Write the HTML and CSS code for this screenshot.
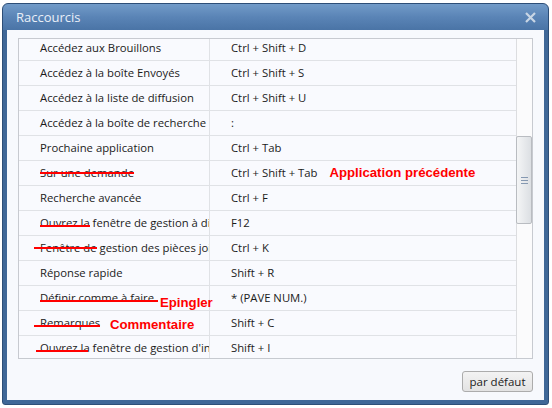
FILE: index.html
```html
<!DOCTYPE html>
<html lang="fr">
<head>
    <meta charset="UTF-8">
    <meta name="viewport" content="width=device-width, initial-scale=1.0">
    <title>Raccourcis</title>
    <link rel="stylesheet" href="styles.css">
</head>
<body>
    <div class="window">
        <div class="titlebar">
            <span class="title">Raccourcis</span>
            <span class="close">
                <svg width="11" height="11" viewBox="0 0 11 11">
                    <path d="M1 1L10 10M10 1L1 10" stroke="#c9d6e5" stroke-width="2.2" fill="none"/>
                </svg>
            </span>
        </div>

        <div class="client">
            <div class="shortcutTable">
                <div class="viewport">
                    <div class="rows">
                        <div class="row">
                            <div class="cmd">Accédez aux Brouillons</div>
                            <div class="keys">Ctrl + Shift + D</div>
                        </div>
                        <div class="row">
                            <div class="cmd">Accédez à la boîte Envoyés</div>
                            <div class="keys">Ctrl + Shift + S</div>
                        </div>
                        <div class="row">
                            <div class="cmd">Accédez à la liste de diffusion</div>
                            <div class="keys">Ctrl + Shift + U</div>
                        </div>
                        <div class="row">
                            <div class="cmd">Accédez à la boîte de recherche</div>
                            <div class="keys">:</div>
                        </div>
                        <div class="row">
                            <div class="cmd">Prochaine application</div>
                            <div class="keys">Ctrl + Tab</div>
                        </div>
                        <div class="row">
                            <div class="cmd"><span class="strike hi">Sur une demande</span></div>
                            <div class="keys">Ctrl + Shift + Tab<span class="note inline">Application précédente</span></div>
                        </div>
                        <div class="row">
                            <div class="cmd">Recherche avancée</div>
                            <div class="keys">Ctrl + F</div>
                        </div>
                        <div class="row">
                            <div class="cmd"><span class="strike">Ouvrez la</span> fenêtre de gestion à distance</div>
                            <div class="keys">F12</div>
                        </div>
                        <div class="row">
                            <div class="cmd"><span class="strike hi out">Fenêtre de</span> gestion des pièces jointes</div>
                            <div class="keys">Ctrl + K</div>
                        </div>
                        <div class="row">
                            <div class="cmd">Réponse rapide</div>
                            <div class="keys">Shift + R</div>
                        </div>
                        <div class="row">
                            <div class="cmd"><span class="strike long">Définir comme à faire</span></div>
                            <div class="keys">* (PAVE NUM.)</div>
                            <span class="note pin">Epingler</span>
                        </div>
                        <div class="row">
                            <div class="cmd"><span class="strike out">Remarques</span></div>
                            <div class="keys">Shift + C</div>
                            <span class="note comment">Commentaire</span>
                        </div>
                        <div class="row">
                            <div class="cmd"><span class="strike out short">Ouvrez la</span> fenêtre de gestion d'informations</div>
                            <div class="keys">Shift + I</div>
                        </div>
                    </div>
                </div>
                <div class="scrollbar">
                    <div class="thumb">
                        <svg width="7" height="7" viewBox="0 0 7 7">
                            <path d="M0 0.5H7M0 3.5H7M0 6.5H7" stroke="#8598b1" stroke-width="1"/>
                        </svg>
                    </div>
                </div>
            </div>

            <div class="actions">
                <button class="btn">par défaut</button>
            </div>
        </div>
    </div>
</body>
</html>
```

FILE: styles.css
```css
body {
    margin: 0;
    padding: 3px 0 0 2px;
    background-color: #fff;
    font-family: "Open Sans", sans-serif;
    font-size: 11.3px;
    color: #1b1b1b;
}

.window {
    width: 547px;
    height: 402px;
    box-sizing: border-box;
    border: 1px solid #2d4e77;
    border-radius: 6px 6px 3px 3px;
    background: linear-gradient(to bottom, #729bc8 0, #5a84b6 13px, #4a74a6 26px, #3f6797 26px);
    padding: 0 4px 4px;
    display: flex;
    flex-direction: column;
}

.titlebar {
    height: 26px;
    display: flex;
    align-items: center;
    justify-content: space-between;
    padding: 0 8px 0 9px;
}

.title {
    font-size: 13px;
    color: #e9eff8;
}

.close svg {
    display: block;
}

.client {
    flex: 1;
    background-color: #f7f9fd;
    padding: 8px 11px;
    display: flex;
    flex-direction: column;
}

.shortcutTable {
    height: 321px;
    box-sizing: border-box;
    border: 1px solid #c7cad0;
    background-color: #f9fafe;
    display: flex;
}

.viewport {
    flex: 1;
    overflow: hidden;
}

/* list is scrolled down by a few pixels */
.rows {
    margin-top: -3px;
}

.row {
    position: relative;
    display: grid;
    grid-template-columns: 191px 1fr;
    height: 25px;
    box-sizing: border-box;
    border-bottom: 1px solid #e0e2e6;
}

.cmd {
    border-right: 1px solid #e0e2e6;
    padding-left: 21px;
    line-height: 24px;
    white-space: nowrap;
    overflow: hidden;
}

.keys {
    padding-left: 21px;
    line-height: 23px;
    white-space: nowrap;
}

.strike {
    position: relative;
    display: inline-block;
}

.strike::after {
    content: '';
    position: absolute;
    left: 0;
    right: 0;
    top: 14px;
    height: 2px;
    background-color: #f00;
}

.strike.hi::after {
    top: 11px;
}

.strike.out::after {
    left: -6px;
}

.strike.short::after {
    left: -4px;
    right: 2px;
}

.strike.long::after {
    right: -4px;
}

.note {
    color: #f00;
    font-family: "Liberation Sans", Arial, sans-serif;
    font-weight: bold;
    font-size: 13.2px;
    line-height: 16px;
}

.note.inline {
    margin-left: 12px;
}

.note.pin {
    position: absolute;
    left: 141px;
    top: 9px;
}

.note.comment {
    position: absolute;
    left: 91px;
    top: 6px;
}

.scrollbar {
    width: 15px;
    border-left: 1px solid #dcdde0;
    background-color: #fbfbfc;
}

.thumb {
    margin: 97px 0 0 -1px;
    width: 16px;
    height: 88px;
    box-sizing: border-box;
    border: 1px solid #b9bcc1;
    border-radius: 2px;
    background: linear-gradient(to right, #f4f5f6, #dcdfe3);
    display: flex;
    align-items: center;
    justify-content: center;
}

.thumb svg {
    display: block;
}

.actions {
    margin-top: 12px;
    display: flex;
    justify-content: flex-end;
}

.btn {
    width: 71px;
    height: 21px;
    padding: 0;
    border: 1px solid #acacac;
    border-radius: 3px;
    background: linear-gradient(to bottom, #f3f3f3, #e3e3e3);
    font-family: "Open Sans", sans-serif;
    font-size: 11.5px;
    color: #1b1b1b;
}
```
